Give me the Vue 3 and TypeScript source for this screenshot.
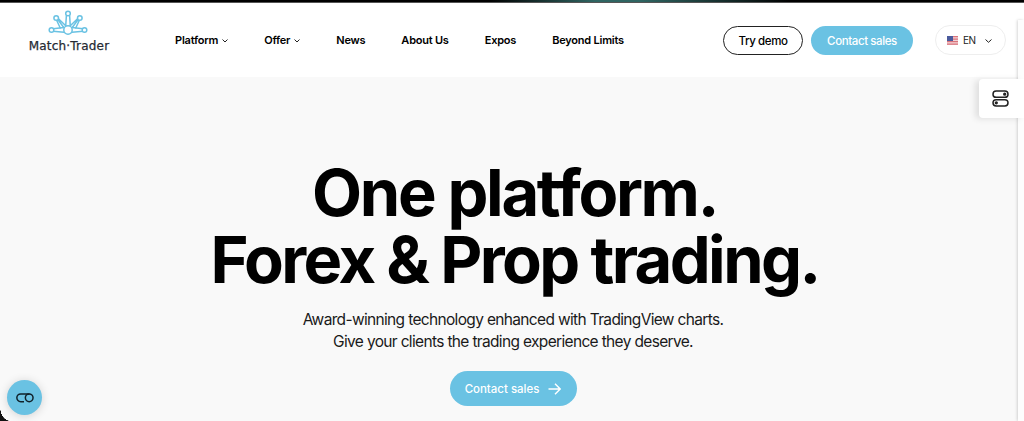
<template>
  <div class="page">
    <div class="top-strip"></div>

    <header class="header">
      <a class="logo">
        <svg class="logo-mark" width="40" height="26" viewBox="0 0 40 26" fill="none" stroke="#6ac2e3" stroke-width="1.5">
          <path d="M18.400 5.500L17.700 16M21.600 5.500L22.300 16" />
          <path d="M10.200 8.500L18 16M8.500 10L12.500 18.500M9.800 9.500L15.800 17.500" />
          <path d="M29.800 8.500L22 16M31.500 10L27.500 18.500M30.200 9.500L24.200 17.500" />
          <path d="M5 18.800L16 17.600M5 21.300L16 22.300M35 18.800L24 17.600M35 21.300L24 22.300" />
          <circle cx="20" cy="20" r="4.200" fill="#fff" />
          <circle cx="20" cy="3.500" r="2.300" fill="#fff" />
          <circle cx="8.200" cy="8" r="2.300" fill="#fff" />
          <circle cx="31.800" cy="8" r="2.300" fill="#fff" />
          <circle cx="3.500" cy="20" r="2.300" fill="#fff" />
          <circle cx="36.500" cy="20" r="2.300" fill="#fff" />
        </svg>
        <span class="logo-text">Match·Trader</span>
      </a>

      <nav class="nav">
        <a v-for="item in navItems" :key="item.label" class="nav-item">
          {{ item.label }}
          <svg v-if="item.hasMenu" class="chevron" width="6" height="4" viewBox="0 0 6 4">
            <path d="M0.500 0.500L3 3L5.500 0.500" />
          </svg>
        </a>
      </nav>

      <div class="actions">
        <button class="btn btn-outline">Try demo</button>
        <button class="btn btn-primary">Contact sales</button>
      </div>

      <button class="lang">
        <svg width="11" height="9" viewBox="0 0 11 9">
          <rect width="11" height="9" fill="#f3d3d5" />
          <path d="M0 .7H11M0 3.200H11M0 5.700H11M0 8.200H11" stroke="#d9737c" stroke-width="1.300" />
          <rect width="6" height="5" fill="#4a5a9c" />
        </svg>
        <span>EN</span>
        <svg class="chevron lang-chevron" width="7" height="4" viewBox="0 0 7 4">
          <path d="M0.500 0.500L3.500 3.300L6.500 0.500" />
        </svg>
      </button>
    </header>

    <main class="hero">
      <h1 class="hero-title">
        <span class="title-first">One platform.</span><br />
        <span class="title-second">Forex &amp; Prop trading.</span>
      </h1>
      <p class="hero-text">
        <span>Award-winning technology enhanced with TradingView charts.</span>
        <span>Give your clients the trading experience they deserve.</span>
      </p>
      <button class="btn btn-primary btn-hero">
        Contact sales
        <svg width="13" height="12" viewBox="0 0 13 12" fill="none" stroke="#fff" stroke-width="1.400">
          <path d="M0.500 6H12M7 0.800L12.200 6L7 11.200" />
        </svg>
      </button>
    </main>

    <div class="edge"></div>
    <button class="switcher" aria-label="Settings">
      <svg width="17" height="17" viewBox="0 0 17 17" fill="none" stroke="#222" stroke-width="1.500">
        <rect x="1" y="1" width="15" height="6.300" rx="3.150" />
        <rect x="1" y="9.700" width="15" height="6.300" rx="3.150" />
        <circle cx="12.700" cy="4.150" r="0.900" fill="#222" />
        <circle cx="4.300" cy="12.850" r="0.900" fill="#222" />
      </svg>
    </button>

    <div class="corner"></div>
    <button class="cookie" aria-label="Cookies">
      <svg width="18" height="10" viewBox="0 0 18 10" fill="none" stroke="#10222b" stroke-width="1.500">
        <path d="M13.500 1H4.700A3.700 3.700 0 0 0 4.700 8.700H8" />
        <circle cx="13.200" cy="4.850" r="3.850" />
      </svg>
    </button>
  </div>
</template>

<script setup lang="ts">
interface NavItem {
  label: string
  hasMenu?: boolean
}

const navItems: NavItem[] = [
  { label: 'Platform', hasMenu: true },
  { label: 'Offer', hasMenu: true },
  { label: 'News' },
  { label: 'About Us' },
  { label: 'Expos' },
  { label: 'Beyond Limits' }
]
</script>

<style>
body {
  margin: 0;
  background: #f9f9f9;
}
</style>

<style scoped>
.page {
  position: relative;
  height: 421px;
  overflow: hidden;
  display: flex;
  flex-direction: column;
  background: #f9f9f9;
  color: #000;
  font-family: Inter, "Liberation Sans", sans-serif;
}

.top-strip {
  flex: none;
  height: 2px;
  background: linear-gradient(90deg, #000 0, #000 490px, #2f6562 595px, #2f6562 640px, #000 790px);
  border-bottom: 1px solid #555;
}

.header {
  flex: none;
  box-sizing: border-box;
  height: 74px;
  padding: 7px 18px 0 28px;
  display: flex;
  align-items: flex-start;
  background: #fff;
}

.logo {
  width: 82px;
  display: flex;
  flex-direction: column;
  align-items: center;
}

.logo-mark {
  display: block;
  margin-right: 2px;
}

.logo-text {
  margin-top: 2px;
  font-family: "DejaVu Sans", sans-serif;
  font-size: 12px;
  line-height: 17px;
  letter-spacing: 0.2px;
  color: #252a33;
  -webkit-text-stroke: 0.25px #252a33;
  white-space: nowrap;
}

.nav {
  margin: 22px 0 0 65px;
  display: flex;
  gap: 36px;
}

.nav-item {
  display: flex;
  align-items: center;
  gap: 4px;
  font-size: 11px;
  font-weight: 600;
  line-height: 16px;
  letter-spacing: -0.22px;
  white-space: nowrap;
}

.chevron {
  fill: none;
  stroke: #222;
  stroke-width: 1;
}

.nav-item .chevron {
  margin-top: 2px;
}

.actions {
  margin: 16px 22px 0 auto;
  display: flex;
  gap: 8px;
}

.btn {
  box-sizing: border-box;
  padding: 0;
  height: 29px;
  border: none;
  border-radius: 18px;
  display: flex;
  align-items: center;
  justify-content: center;
  font-family: inherit;
  font-size: 11.5px;
  font-weight: 500;
  letter-spacing: -0.4px;
  white-space: nowrap;
}

.btn-outline {
  width: 80px;
  border: 1px solid #222;
  background: #fff;
  color: #000;
}

.btn-primary {
  width: 102px;
  background: #6ac2e3;
  color: #fff;
}

.lang {
  box-sizing: border-box;
  width: 71px;
  height: 30px;
  margin-top: 15px;
  padding: 0 13px 0 11px;
  display: flex;
  align-items: center;
  border: 1px solid #eee;
  border-radius: 15px;
  background: #fff;
  color: #222;
  font-family: inherit;
  font-size: 10px;
}

.lang span {
  margin-left: 5px;
  letter-spacing: -0.4px;
}

.lang-chevron {
  margin: 2px 0 0 auto;
}

.hero {
  padding: 82px 0 0 2px;
  display: flex;
  flex-direction: column;
  align-items: center;
}

.hero-title {
  margin: 0;
  padding-left: 3px;
  font-size: 65px;
  font-weight: 700;
  line-height: 67px;
  text-align: center;
  white-space: nowrap;
}

.title-first {
  letter-spacing: -2.3px;
}

.title-second {
  letter-spacing: -2.6px;
}

.hero-text {
  margin: 16px 0 0;
  display: flex;
  flex-direction: column;
  align-items: center;
  color: #1a1a1a;
  font-size: 15.5px;
  line-height: 22px;
  letter-spacing: -0.66px;
  white-space: nowrap;
}

.btn-hero {
  width: 127px;
  height: 35px;
  margin-top: 18px;
  gap: 9px;
  letter-spacing: -0.02px;
}

.edge {
  position: absolute;
  top: 20px;
  right: 0;
  bottom: 0;
  width: 6px;
  background: #fdfdfd;
  box-shadow: -1px 0 3px rgba(0, 0, 0, 0.16);
}

.switcher {
  position: absolute;
  top: 79px;
  right: 0;
  width: 45px;
  height: 39px;
  padding: 0 2px 0 0;
  display: flex;
  align-items: center;
  justify-content: center;
  border: none;
  border-radius: 4px 0 0 4px;
  background: #fff;
  box-shadow: -4px 1px 6px rgba(0, 0, 0, 0.1);
}

.corner {
  position: absolute;
  left: 0;
  bottom: 0;
  width: 10px;
  height: 14px;
  background: radial-gradient(ellipse 10px 14px at 100% 0, transparent 97%, #111 100%);
}

.cookie {
  position: absolute;
  left: 7px;
  bottom: 6px;
  width: 35px;
  height: 35px;
  padding: 0;
  display: flex;
  align-items: center;
  justify-content: center;
  border: none;
  border-radius: 50%;
  background: #6ac2e3;
  box-shadow: 0 1px 10px rgba(0, 0, 0, 0.16);
}
</style>
